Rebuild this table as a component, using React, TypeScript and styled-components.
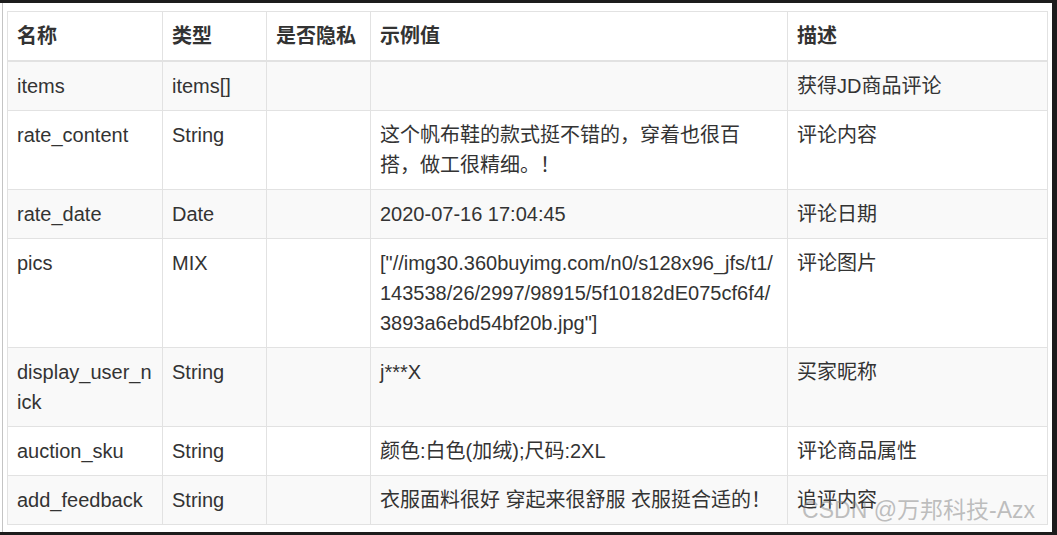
import React from "react";
import styled, { createGlobalStyle } from "styled-components";

const Global = createGlobalStyle`
  html, body { margin: 0; padding: 0; background: #ffffff; }
  body { font-family: "Liberation Sans", Arial, "Noto Sans CJK SC", sans-serif; }
`;

const Frame = styled.div`
  box-sizing: border-box;
  width: 1057px;
  height: 535px;
  border-top: 3px solid #1c1c1c;
  border-right: 5px solid #1c1c1c;
  border-bottom: 3px solid #1c1c1c;
  background: #ffffff;
  overflow: hidden;
`;

const Screen = styled.div`
  box-sizing: border-box;
  height: 100%;
  margin-left: 2px;
  border-left: 1px solid #c4c4c4;
  padding: 8px 0 0 4px;
`;

const Wrap = styled.div`
  position: relative;
  width: 1040px;
`;

const Table = styled.table`
  width: 1040px;
  border-collapse: collapse;
  table-layout: fixed;
  color: #333333;
  font-family: "Liberation Sans", Arial, "Noto Sans CJK SC", sans-serif;
  font-size: 20px;
  line-height: 30px;
`;

const Th = styled.th`
  text-align: left;
  font-weight: bold;
  padding: 9px 9px;
  border: 1px solid #e2e2e2;
  border-bottom: 2px solid #e2e2e2;
  vertical-align: bottom;
`;

const Row = styled.tr<{ $striped: boolean }>`
  background: ${(p) => (p.$striped ? "#f9f9f9" : "#ffffff")};
`;

const Td = styled.td`
  padding: 9px 8px 9px 9px;
  border: 1px solid #e2e2e2;
  vertical-align: top;
  word-break: break-all;
`;

const Watermark = styled.div`
  position: absolute;
  right: 12px;
  bottom: 2px;
  font-family: "Liberation Sans", Arial, "Noto Sans CJK SC", sans-serif;
  font-size: 23px;
  line-height: 26px;
  color: rgba(130, 130, 130, 0.5);
  pointer-events: none;
  white-space: nowrap;
`;

type R = { name: string; type: string; priv: string; example: React.ReactNode; desc: string };

const rows: R[] = [
  { name: "items", type: "items[]", priv: "", example: "", desc: "获得JD商品评论" },
  { name: "rate_content", type: "String", priv: "", example: "这个帆布鞋的款式挺不错的，穿着也很百搭，做工很精细。！", desc: "评论内容" },
  { name: "rate_date", type: "Date", priv: "", example: "2020-07-16 17:04:45", desc: "评论日期" },
  {
    name: "pics",
    type: "MIX",
    priv: "",
    example: (
      <>
        ["//img30.360buyimg.com/n0/s128x96_jfs/t1/
        <br />
        143538/26/2997/98915/5f10182dE075cf6f4/
        <br />
        3893a6ebd54bf20b.jpg"]
      </>
    ),
    desc: "评论图片",
  },
  { name: "display_user_nick", type: "String", priv: "", example: "j***X", desc: "买家昵称" },
  { name: "auction_sku", type: "String", priv: "", example: "颜色:白色(加绒);尺码:2XL", desc: "评论商品属性" },
  { name: "add_feedback", type: "String", priv: "", example: "衣服面料很好 穿起来很舒服 衣服挺合适的！", desc: "追评内容" },
];

export default function App() {
  return (
    <>
      <Global />
      <Frame>
        <Screen>
          <Wrap>
            <Table>
              <colgroup>
                <col style={{ width: 155 }} />
                <col style={{ width: 104 }} />
                <col style={{ width: 104 }} />
                <col style={{ width: 417 }} />
                <col style={{ width: 260 }} />
              </colgroup>
              <thead>
                <tr>
                  <Th>名称</Th>
                  <Th>类型</Th>
                  <Th>是否隐私</Th>
                  <Th>示例值</Th>
                  <Th>描述</Th>
                </tr>
              </thead>
              <tbody>
                {rows.map((r, i) => (
                  <Row key={r.name} $striped={i % 2 === 0}>
                    <Td>{r.name}</Td>
                    <Td>{r.type}</Td>
                    <Td>{r.priv}</Td>
                    <Td>{r.example}</Td>
                    <Td>{r.desc}</Td>
                  </Row>
                ))}
              </tbody>
            </Table>
            <Watermark>CSDN @万邦科技-Azx</Watermark>
          </Wrap>
        </Screen>
      </Frame>
    </>
  );
}
